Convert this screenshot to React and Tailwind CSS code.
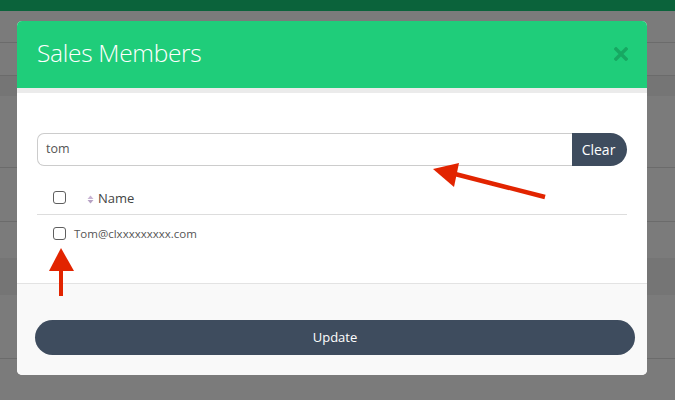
const font = { fontFamily: '"Open Sans", "Liberation Sans", sans-serif' }

function SortIcon() {
  return (
    <svg width="7" height="9" viewBox="0 0 7 9" className="mr-[4px] mt-[1px]">
      <path d="M3.5 0.5 L6.5 4 L0.5 4 Z" fill="#c7b3d3" />
      <path d="M3.5 8.5 L6.5 5 L0.5 5 Z" fill="#b6a2c4" />
    </svg>
  )
}

function Box() {
  return <span className="block w-[13px] h-[13px] rounded-[3px] border border-[#5f5f5f] bg-white" />
}

export default function App() {
  return (
    <div className="relative w-[675px] h-[400px] overflow-hidden bg-[#7b7b7b]" style={font}>
      {/* page behind the backdrop */}
      <div className="flex flex-col">
        <div className="h-[11px] bg-[#0b633b]" />
        <div className="h-[32px] border-b border-[#6b6b6b]" />
        <div className="h-[33px] border-b border-[#6b6b6b]" />
        <div className="h-[20px] bg-[#757575]" />
        <div className="h-[72px] border-b border-[#6b6b6b]" />
        <div className="h-[54px] border-b border-[#6b6b6b]" />
        <div className="h-[36px]" />
        <div className="h-[37px] bg-[#757575]" />
        <div className="h-[64px] border-b border-[#6b6b6b]" />
      </div>

      {/* modal */}
      <div className="absolute left-[17px] top-[21px] w-[630px] rounded-[5px] overflow-hidden bg-white">
        <div className="h-[67px] bg-[#1fcd7a] flex items-center justify-between pl-[20px] pr-[19px]">
          <h1 className="text-white text-[24.5px] font-light tracking-[-0.3px] mt-[-2px]">Sales Members</h1>
          <svg width="14" height="14" viewBox="0 0 14 14" className="mt-[-2px]">
            <path d="M2 2 L12 12 M12 2 L2 12" stroke="#17a862" strokeWidth="3.4" strokeLinecap="square" />
          </svg>
        </div>
        <div className="h-[5px] bg-[#ebebeb]" />

        <div className="px-[20px] pt-[40px] h-[190px]">
          <div className="flex h-[33px]">
            <div className="flex-1 flex items-center border border-[#cccccc] border-r-0 rounded-l-[7px] pl-[8px] text-[12.5px] text-[#555]">
              tom
            </div>
            <button className="w-[55px] bg-[#3e4c5e] text-white text-[14px] rounded-r-full pr-[2px]">Clear</button>
          </div>

          <div className="mt-[16px] flex items-center h-[33px] border-b border-[#dddddd] pl-[16px] pb-[1px]">
            <Box />
            <div className="ml-[21px] mt-[3px] flex items-center text-[13px] text-[#444]">
              <SortIcon />
              Name
            </div>
          </div>
          <div className="flex items-center h-[36px] pl-[16px] pt-[1px]">
            <Box />
            <span className="ml-[8px] mt-[1px] text-[11.5px] text-[#555]">Tom@clxxxxxxxxx.com</span>
          </div>
        </div>

        <div className="border-t border-[#e3e3e3] bg-[#f9f9f9] h-[92px] pt-[36px]">
          <button className="ml-[18px] w-[600px] h-[35px] rounded-full bg-[#3e4c5e] text-white text-[13px] font-medium">
            Update
          </button>
        </div>
      </div>

      {/* annotation arrows */}
      <svg className="absolute left-0 top-0" width="675" height="400">
        <path d="M545 197 L455 174" stroke="#e22400" strokeWidth="4.5" />
        <path d="M433 169 L459 163 L454 187 Z" fill="#e22400" />
        <path d="M61 296 L61 266" stroke="#e22400" strokeWidth="4" />
        <path d="M61 248 L74 271 L49 271 Z" fill="#e22400" />
      </svg>
    </div>
  )
}
